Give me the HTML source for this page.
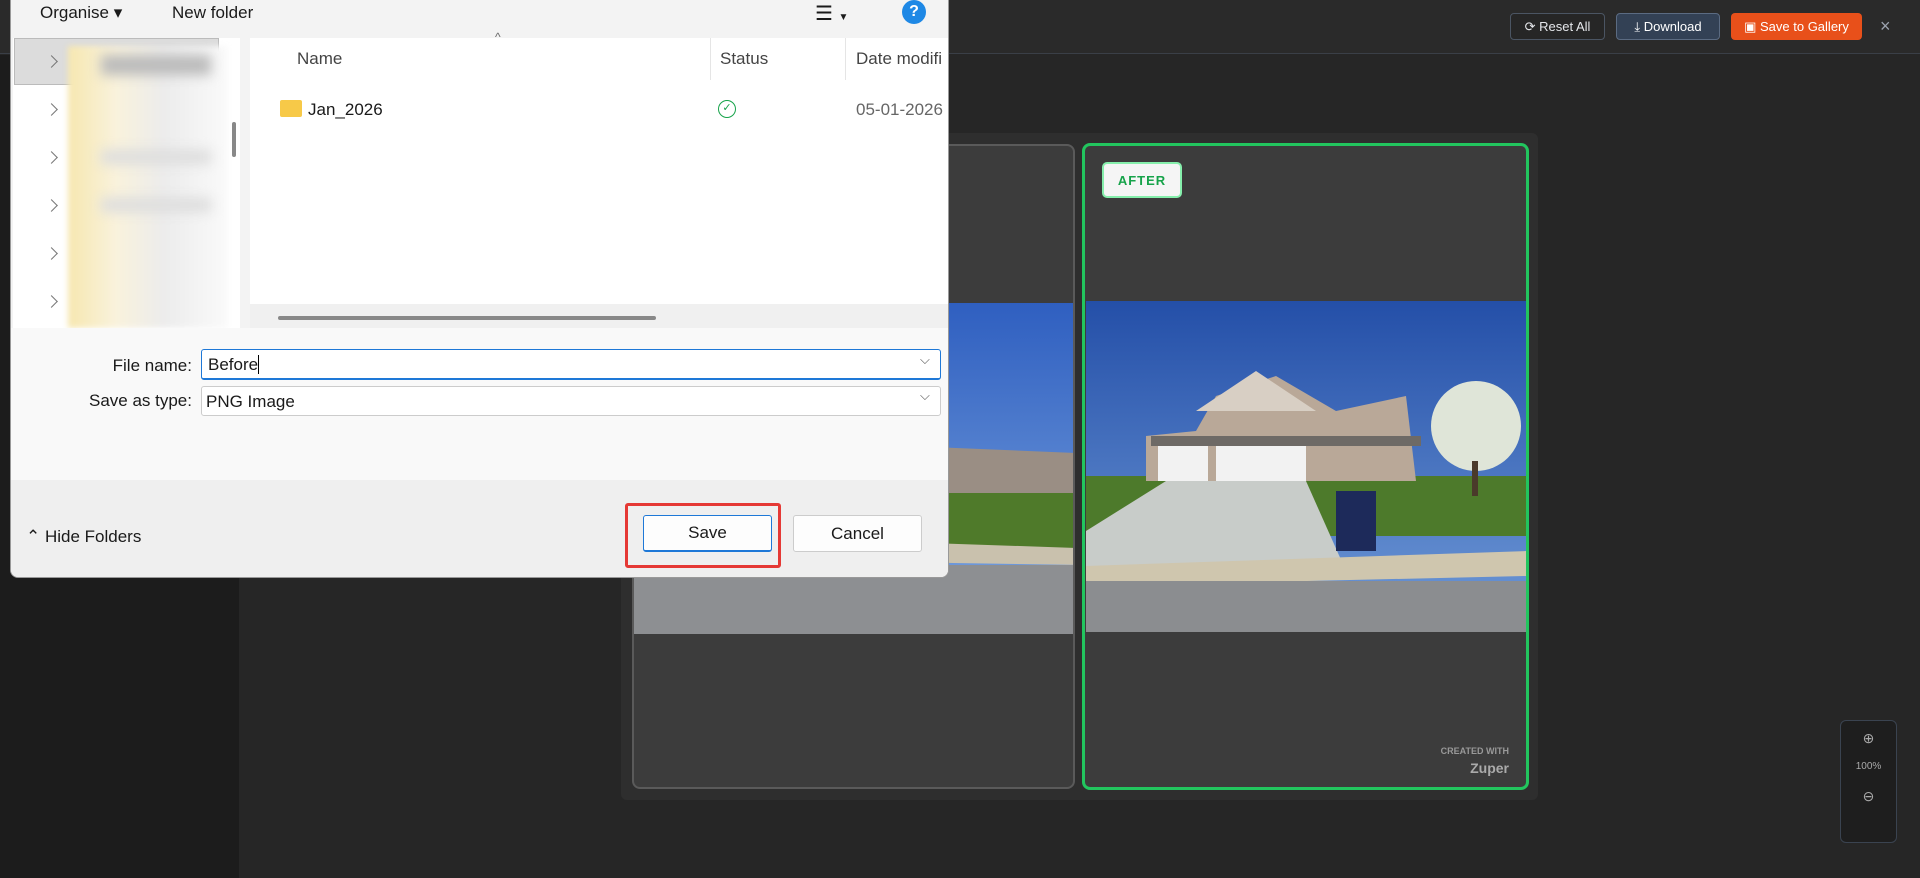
<!DOCTYPE html>
<html><head><meta charset="utf-8"><style>
*{box-sizing:border-box;margin:0;padding:0}
body{width:1920px;height:878px;overflow:hidden;background:#262626;font-family:"Liberation Sans",sans-serif;position:relative}
.abs{position:absolute}
.hdr{left:0;top:0;width:1920px;height:54px;background:#2a2a2a;border-bottom:1px solid #3a3f47}
.btn{top:13px;height:27px;border-radius:4px;font-size:13px;color:#e5e7eb;display:flex;align-items:center;justify-content:center;gap:6px}
.dlg{left:10px;top:0;width:939px;height:578px;background:#f3f3f3;border:1px solid #999;border-top:none;border-radius:0 0 8px 8px;overflow:hidden;color:#1a1a1a;font-size:17px}
.chev{left:36px;width:9px;height:9px;border-right:1.2px solid #777;border-top:1.2px solid #777;transform:rotate(45deg)}
.inp{background:#fff;border:1px solid #ccc;border-radius:3px}
</style></head><body>
<div class="abs" style="left:0;top:55px;width:239px;height:823px;background:#1c1c1c"></div>
<div class="abs hdr"></div>
<div class="abs btn" style="left:1510px;width:95px;border:1px solid #4b5563;background:#262626">⟳ Reset All</div>
<div class="abs btn" style="left:1616px;width:104px;border:1px solid #5b6b82;background:#334155;color:#fff">⤓ Download</div>
<div class="abs btn" style="left:1731px;width:131px;background:#e8501a;color:#fff">▣ Save to Gallery</div>
<div class="abs" style="left:1880px;top:16px;color:#9ca3af;font-size:18px">×</div>

<div class="abs" style="left:621px;top:133px;width:917px;height:667px;background:#2e2e2e;border-radius:6px"></div>
<div class="abs" style="left:632px;top:144px;width:443px;height:645px;background:#3c3c3c;border:2px solid #5a5a5a;border-radius:8px;overflow:hidden">
 <svg class="abs" style="left:0;top:157px" width="443" height="331" viewBox="0 0 443 331" preserveAspectRatio="none">
  <defs><linearGradient id="s1" x1="0" y1="0" x2="0" y2="1"><stop offset="0" stop-color="#2f5fc0"/><stop offset="1" stop-color="#7da6e0"/></linearGradient></defs>
  <rect width="443" height="331" fill="url(#s1)"/>
  <polygon points="0,120 40,110 120,130 200,140 443,150 443,200 0,200" fill="#9a8e84"/>
  <rect x="0" y="130" width="40" height="70" fill="#bdb4aa"/>
  <rect x="0" y="190" width="443" height="70" fill="#4f7a2a"/>
  <polygon points="0,230 443,245 443,262 0,255" fill="#c9c1ad"/>
  <rect x="0" y="262" width="443" height="69" fill="#8d8f92"/>
 </svg>
</div>
<div class="abs" style="left:1082px;top:143px;width:447px;height:647px;background:#3c3c3c;border:3px solid #22c55e;border-radius:8px;overflow:hidden">
 <svg class="abs" style="left:1px;top:155px" width="441" height="331" viewBox="0 0 441 331" preserveAspectRatio="none">
  <defs><linearGradient id="s2" x1="0" y1="0" x2="0" y2="1"><stop offset="0" stop-color="#244fa8"/><stop offset="1" stop-color="#6f9ad8"/></linearGradient></defs>
  <rect width="441" height="331" fill="url(#s2)"/>
  <rect x="0" y="175" width="441" height="60" fill="#4d7a2b"/>
  <polygon points="60,135 110,130 130,95 190,75 250,110 320,95 330,180 60,180" fill="#b9a898"/>
  <polygon points="110,110 170,70 230,110" fill="#d8cfc4"/>
  <rect x="65" y="135" width="270" height="10" fill="#6e6a66"/>
  <rect x="72" y="145" width="50" height="35" fill="#f2f2f2"/><rect x="130" y="145" width="90" height="35" fill="#f2f2f2"/>
  <circle cx="390" cy="125" r="45" fill="#dfe5d8"/><rect x="386" y="160" width="6" height="35" fill="#4a3a2a"/>
  <polygon points="80,180 220,180 260,270 0,275 0,230" fill="#c8ccc9"/>
  <rect x="250" y="190" width="40" height="60" fill="#1d2a5a"/>
  <polygon points="0,265 441,250 441,275 0,285" fill="#cfc6ae"/>
  <rect x="0" y="280" width="441" height="51" fill="#8b8d90"/>
 </svg>
 <div class="abs" style="left:17px;top:16px;width:80px;height:36px;background:#f5f5f5;border:2px solid #86efac;border-radius:5px;color:#16a34a;font-weight:bold;font-size:13px;letter-spacing:1px;display:flex;align-items:center;justify-content:center">AFTER</div>
 <div class="abs" style="right:17px;top:600px;color:#999;font-size:9px;font-weight:bold;text-align:right">CREATED WITH</div>
 <div class="abs" style="right:17px;top:614px;color:#aaa;font-size:14px;font-weight:bold">Zuper</div>
</div>

<div class="abs" style="left:1840px;top:720px;width:57px;height:123px;background:#1e1e1e;border:1px solid #3a4350;border-radius:6px;color:#aaa;font-size:10px;text-align:center">
 <div style="margin-top:9px;font-size:14px">⊕</div><div style="margin-top:14px">100%</div><div style="margin-top:16px;font-size:14px">⊖</div>
</div>

<div class="abs dlg">
 <div class="abs" style="left:29px;top:3px">Organise ▾</div>
 <div class="abs" style="left:161px;top:3px">New folder</div>
 <div class="abs" style="left:804px;top:1px;font-size:20px">☰ <span style="font-size:10px">▼</span></div>
 <div class="abs" style="left:891px;top:0;width:24px;height:24px;border-radius:50%;background:#1e88e5;color:#fff;font-size:16px;font-weight:bold;text-align:center;line-height:24px">?</div>
 <div class="abs" style="left:2px;top:38px;width:227px;height:290px;background:#fff"></div>
 <div class="abs" style="left:3px;top:38px;width:205px;height:47px;background:#dcdcdc;border:1px solid #bbb"></div>
 <div class="abs" style="left:57px;top:46px;width:160px;height:282px;background:linear-gradient(90deg,#f6e7b0 0,#f9f2dc 30%,#ececec 60%,#fafafa);filter:blur(3px)"></div>
 <div class="abs" style="left:90px;top:55px;width:110px;height:20px;background:#bbb;filter:blur(6px)"></div>
 <div class="abs" style="left:90px;top:150px;width:110px;height:14px;background:#ddd;filter:blur(6px)"></div>
 <div class="abs" style="left:90px;top:198px;width:110px;height:14px;background:#ddd;filter:blur(6px)"></div>
 <div class="abs chev" style="top:57px"></div><div class="abs chev" style="top:105px"></div><div class="abs chev" style="top:153px"></div><div class="abs chev" style="top:201px"></div><div class="abs chev" style="top:249px"></div><div class="abs chev" style="top:297px"></div>
 <div class="abs" style="left:221px;top:122px;width:4px;height:35px;background:#888;border-radius:2px"></div>
 <div class="abs" style="left:239px;top:38px;width:700px;height:290px;background:#fff"></div>
 <div class="abs" style="left:699px;top:38px;width:1px;height:42px;background:#e5e5e5"></div>
 <div class="abs" style="left:834px;top:38px;width:1px;height:42px;background:#e5e5e5"></div>
 <div class="abs" style="left:484px;top:30px;font-size:12px;color:#666">^</div>
 <div class="abs" style="left:286px;top:49px;color:#444">Name</div>
 <div class="abs" style="left:709px;top:49px;color:#444">Status</div>
 <div class="abs" style="left:845px;top:49px;color:#444;white-space:nowrap">Date modifi</div>
 <div class="abs" style="left:269px;top:100px;width:22px;height:17px;background:#f7c948;border-radius:2px"></div>
 <div class="abs" style="left:297px;top:100px">Jan_2026</div>
 <div class="abs" style="left:707px;top:100px;width:18px;height:18px;border:1.5px solid #16a34a;border-radius:50%;color:#16a34a;font-size:11px;text-align:center;line-height:15px">✓</div>
 <div class="abs" style="left:845px;top:100px;color:#666">05-01-2026</div>
 <div class="abs" style="left:239px;top:304px;width:700px;height:24px;background:#f0f0f0"></div>
 <div class="abs" style="left:267px;top:316px;width:378px;height:4px;background:#888;border-radius:2px"></div>
 <div class="abs" style="left:0;top:328px;width:939px;height:152px;background:#f9f9f9"></div>
 <div class="abs" style="left:0;top:356px;width:181px;text-align:right">File name:</div>
 <div class="abs inp" style="left:190px;top:349px;width:740px;height:31px;border:1px solid #1e78d7;border-bottom:2px solid #1e78d7;padding:5px 6px">Before<span style="border-left:1px solid #000"></span></div>
 <div class="abs" style="left:909px;top:352px;color:#555;font-size:13px">⌵</div>
 <div class="abs" style="left:0;top:391px;width:181px;text-align:right">Save as type:</div>
 <div class="abs inp" style="left:190px;top:386px;width:740px;height:30px;padding:5px 4px">PNG Image</div>
 <div class="abs" style="left:909px;top:388px;color:#555;font-size:13px">⌵</div>
 <div class="abs" style="left:0;top:480px;width:939px;height:98px;background:#efefef"></div>
 <div class="abs" style="left:15px;top:527px">⌃ Hide Folders</div>
 <div class="abs" style="left:614px;top:503px;width:156px;height:65px;border:3px solid #e53935;border-radius:3px"></div>
 <div class="abs" style="left:632px;top:515px;width:129px;height:37px;background:#fdfdfd;border:1px solid #1e78d7;border-bottom:2px solid #1e78d7;border-radius:3px;text-align:center;line-height:34px">Save</div>
 <div class="abs" style="left:782px;top:515px;width:129px;height:37px;background:#fdfdfd;border:1px solid #ccc;border-radius:3px;text-align:center;line-height:35px">Cancel</div>
</div>
</body></html>
